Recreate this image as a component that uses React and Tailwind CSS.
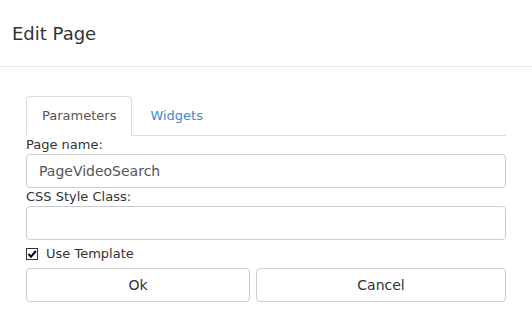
import { useState } from 'react';

export default function App() {
  const [tab, setTab] = useState('params');
  const [name, setName] = useState('PageVideoSearch');
  const [css, setCss] = useState('');
  const [useTpl, setUseTpl] = useState(true);

  return (
    <div className="w-[532px] h-[328px] bg-white text-[#333] font-['DejaVu_Sans',Verdana,sans-serif]">
      <div className="h-[67px] px-3 flex items-center border-b border-[#e5e5e5]">
        <h1 className="text-[18px] leading-none pt-[1px]">Edit Page</h1>
      </div>

      <div className="pt-[29px] pl-[26px] pr-[26px]">
        <div className="flex border-b border-[#ddd]">
          <button
            onClick={() => setTab('params')}
            className={`-mb-px mr-[2px] px-[15px] py-[10px] leading-[18px] text-[13px] rounded-t border ${tab === 'params' ? 'border-[#ddd] border-b-white bg-white text-[#555]' : 'border-transparent text-[#428bca]'}`}
          >
            Parameters
          </button>
          <button
            onClick={() => setTab('widgets')}
            className={`-mb-px mr-[2px] px-[15px] py-[10px] leading-[18px] text-[13px] rounded-t border ${tab === 'widgets' ? 'border-[#ddd] border-b-white bg-white text-[#555]' : 'border-transparent text-[#428bca]'}`}
          >
            Widgets
          </button>
        </div>

        <label className="block text-[13px] leading-[18px]">Page name:</label>
        <input
          className="block w-full h-[34px] px-3 border border-[#ccc] rounded text-[14px] text-[#555] outline-none"
          value={name}
          onChange={(e) => setName(e.target.value)}
        />
        <label className="block text-[13px] leading-[18px]">CSS Style Class:</label>
        <input
          className="block w-full h-[34px] px-3 border border-[#ccc] rounded text-[14px] text-[#555] outline-none"
          value={css}
          onChange={(e) => setCss(e.target.value)}
        />

        <label className="h-[28px] flex items-center gap-[8px] text-[13px] cursor-pointer" onClick={() => setUseTpl(!useTpl)}>
          <span className="w-[12px] h-[12px] border border-[#333] bg-white grid place-items-center">
            {useTpl && (
              <svg width="10" height="10" viewBox="0 0 10 10">
                <path d="M1.5 5 L4 7.8 L8.8 2" fill="none" stroke="#000" strokeWidth="2" />
              </svg>
            )}
          </span>
          Use Template
        </label>

        <div className="flex gap-[6px]">
          <button className="w-[224px] h-[34px] border border-[#ccc] rounded text-[14px] text-[#333] bg-white">Ok</button>
          <button className="flex-1 h-[34px] border border-[#ccc] rounded text-[14px] text-[#333] bg-white">Cancel</button>
        </div>
      </div>
    </div>
  );
}
